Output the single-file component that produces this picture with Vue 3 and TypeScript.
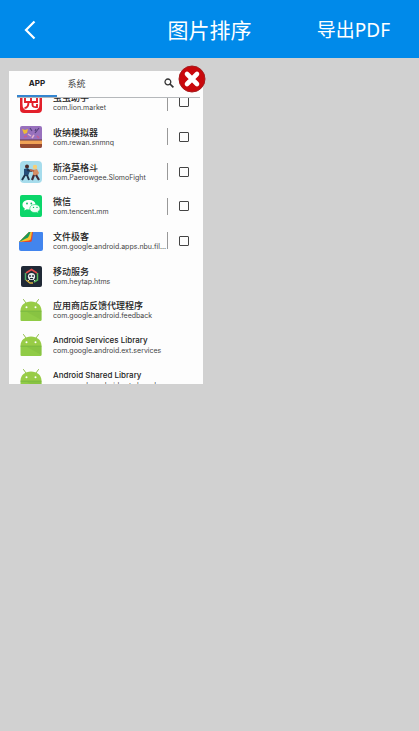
<script setup lang="ts">
import { ref } from 'vue'

type IconName = 'lion' | 'box' | 'fight' | 'chat' | 'files' | 'service' | 'android'

interface AppRow {
  icon: IconName
  title: string
  pkg: string
  selectable: boolean
  checked: boolean
}

const tabs = ['APP', '系统']
const activeTab = ref('APP')
const visible = ref(true)

const isLatin = (text: string): boolean => /^[\w ]+$/.test(text)

const apps = ref<AppRow[]>([
  { icon: 'lion', title: '虫虫助手', pkg: 'com.lion.market', selectable: true, checked: false },
  { icon: 'box', title: '收纳模拟器', pkg: 'com.rewan.snmnq', selectable: true, checked: false },
  { icon: 'fight', title: '斯洛莫格斗', pkg: 'com.Paerowgee.SlomoFight', selectable: true, checked: false },
  { icon: 'chat', title: '微信', pkg: 'com.tencent.mm', selectable: true, checked: false },
  { icon: 'files', title: '文件极客', pkg: 'com.google.android.apps.nbu.files', selectable: true, checked: false },
  { icon: 'service', title: '移动服务', pkg: 'com.heytap.htms', selectable: false, checked: false },
  { icon: 'android', title: '应用商店反馈代理程序', pkg: 'com.google.android.feedback', selectable: false, checked: false },
  { icon: 'android', title: 'Android Services Library', pkg: 'com.google.android.ext.services', selectable: false, checked: false },
  { icon: 'android', title: 'Android Shared Library', pkg: 'com.google.android.ext.shared', selectable: false, checked: false },
])
</script>

<template>
  <div class="page">
    <header class="bar">
      <button class="back" type="button" aria-label="返回">
        <svg viewBox="0 0 12 20" width="12" height="20"><path d="M10.500 1.500 2 10l8.500 8.500" fill="none" stroke="#fff" stroke-width="2.200" /></svg>
      </button>
      <h1 class="heading">图片排序</h1>
      <button class="export" type="button">导出PDF</button>
    </header>

    <main class="gallery">
      <article v-if="visible" class="sheet">
        <div class="shot">
          <nav class="tabs">
            <button
              v-for="tab in tabs"
              :key="tab"
              type="button"
              class="tab"
              :class="{ active: tab === activeTab }"
              @click="activeTab = tab"
            >{{ tab }}</button>
            <button class="search" type="button" aria-label="搜索">
              <svg viewBox="0 0 10 10" width="10" height="10">
                <circle cx="3.900" cy="3.900" r="2.900" fill="none" stroke="#333" stroke-width="1.300" />
                <path d="M6 6l3.400 3.400" stroke="#333" stroke-width="1.700" />
              </svg>
            </button>
          </nav>
          <div class="window">
            <ul class="list">
              <li v-for="app in apps" :key="app.pkg" class="row">
                <svg class="icon" viewBox="0 0 24 24" aria-hidden="true">
                  <g v-if="app.icon === 'lion'">
                    <rect x="1" y="1" width="22" height="22" rx="4" fill="#e3202b" />
                    <path d="M3.500 4h17v10q0 6-5 6H8q-4.500 0-4.500-6z" fill="#fff" />
                    <path d="M6 6v6h12V6zM12 3v9M9.500 12q0 6-4 6M13.500 12v3q0 2.500 4.500 2v-3" fill="none" stroke="#e3202b" stroke-width="1.900" />
                  </g>
                  <g v-else-if="app.icon === 'box'">
                    <rect x="1" y="1" width="22" height="22" rx="2" fill="#9871bd" />
                    <path d="M3 4l3 1 3-1-1 4-3 1z" fill="#edba38" />
                    <path d="M11 3l2 3M20 3l-4 5M17 4l-1 2" stroke="#55417c" stroke-width="1.200" />
                    <path d="M9 9l3 2M15 10l-2 3" stroke="#e4b1cc" stroke-width="1.500" />
                    <path d="M5 12l3-1M18 11l2 2" stroke="#c95c91" stroke-width="1.500" />
                    <path d="M1 15h22v4H1z" fill="#f0a256" />
                    <path d="M1 19h22v2q0 2-2 2H3q-2 0-2-2z" fill="#974a30" />
                    <path d="M1 15h22" stroke="#673749" />
                  </g>
                  <g v-else-if="app.icon === 'fight'">
                    <rect x="1" y="1" width="22" height="22" rx="4" fill="#a6dcec" />
                    <circle cx="8" cy="6.500" r="2" fill="#4b2b2a" />
                    <path d="M5 9l4-1 2 3-2 5H5z" fill="#244d79" />
                    <path d="M8 10l5 1M6 15l-3 5M8 15l2 5" fill="none" stroke="#203349" stroke-width="2" />
                    <circle cx="16" cy="7" r="2.200" fill="#f6ce76" />
                    <path d="M14 10l4-1 2 4-2 3h-4z" fill="#d58d65" />
                    <path d="M15 11l-4-1" stroke="#b96349" stroke-width="2" />
                    <path d="M15 15l-2 5M17 15l3 5" stroke="#422b39" stroke-width="2.200" />
                  </g>
                  <g v-else-if="app.icon === 'chat'">
                    <rect x="1" y="1" width="22" height="22" rx="2" fill="#0bd66a" />
                    <path d="M10 6c-4 0-6.500 2-6.500 4.700 0 1.600.900 2.900 2.300 3.700L5.300 16.500l2.500-1.200c5 1.200 8.700-1.300 8.700-4.600C16.500 8 14 6 10 6z" fill="#fff" />
                    <path d="M16 10.500c-3.200 0-5.200 1.700-5.200 4 0 2.800 3 4.600 6.500 3.800l2 1-.400-1.700c1.400-.900 2.100-1.900 2.100-3.100 0-2.300-2-4-5-4z" fill="#effff5" stroke="#0bd66a" stroke-width=".6" />
                    <g fill="#0bbd60"><circle cx="8" cy="9.500" r=".9" /><circle cx="12.300" cy="9.500" r=".9" /><circle cx="14.500" cy="13.400" r=".7" /><circle cx="18" cy="13.400" r=".7" /></g>
                  </g>
                  <g v-else-if="app.icon === 'files'">
                    <path d="M10 3h13q1 0 1 1v16q0 2-2 2H2q-2 0-2-2v-7z" fill="#4285ee" />
                    <path d="M10 3h4L13 11q0 2-2 2H0z" fill="#df4638" />
                    <path d="M10 3h3l-1 6q0 2-2 2.500L0 13z" fill="#f7c52d" />
                    <path d="M10 3h1.500L10 7q-1 2-3 2.500L0 13z" fill="#1b9a59" />
                  </g>
                  <g v-else-if="app.icon === 'service'">
                    <rect x="2" y="2" width="21" height="21" rx="2" fill="#202936" />
                    <g fill="none" stroke-width="1.500">
                      <path d="M7 9l5.500-3.500L18 9" stroke="#e24c4c" />
                      <path d="M18.500 9v7L15 18" stroke="#59b65c" />
                      <path d="M14 19h-3l-4-3" stroke="#d7b341" />
                      <path d="M6.500 9v7" stroke="#4dad68" />
                    </g>
                    <circle cx="12.500" cy="12.500" r="3.600" fill="#e6ebed" />
                    <circle cx="11" cy="12" r=".9" fill="#202936" /><circle cx="14" cy="12" r=".9" fill="#202936" />
                    <path d="M11 14.500h3" stroke="#202936" />
                    <path d="M9 17l2-2M16 17l-2-2" stroke="#d8dfe2" />
                  </g>
                  <g v-else>
                    <path d="M7 5L4.500 1.500M17 5l2.500-3.500" stroke="#91bd4c" stroke-width="1" stroke-linecap="round" />
                    <path d="M1.500 13C1.500 7 6 3.500 12 3.500S22.500 7 22.500 13z" fill="#98cc46" />
                    <path d="M1.500 13h21v9q0 1-1 1h-19q-1 0-1-1z" fill="#90cb46" />
                    <path d="M1.500 13.200h21" stroke="#71b340" stroke-width=".8" />
                    <path d="M8 14l14.500 8v-8.500z" fill="#80bb3e" opacity=".5" />
                    <circle cx="7.500" cy="9.300" r="1" fill="#fff" /><circle cx="16.500" cy="9.300" r="1" fill="#fff" />
                  </g>
                </svg>
                <div class="text">
                  <span class="title" :class="{ latin: isLatin(app.title) }">{{ app.title }}</span>
                  <span class="pkg">{{ app.pkg }}</span>
                </div>
                <div v-if="app.selectable" class="pick">
                  <input v-model="app.checked" type="checkbox" class="check" :aria-label="app.title" />
                </div>
              </li>
            </ul>
          </div>
        </div>
        <button class="remove" type="button" aria-label="删除图片" @click="visible = false">
          <svg viewBox="0 0 28 28" width="28" height="28">
            <circle cx="14" cy="14" r="13" fill="#c9080c" stroke="#a51c1e" stroke-width="1" />
            <path d="M9 9l10 10M19 9L9 19" stroke="#fff" stroke-width="4.600" stroke-linecap="round" />
          </svg>
        </button>
      </article>
    </main>
  </div>
</template>

<style>
body {
  background: #d1d1d1;
}
</style>

<style scoped>
.page {
  min-height: 100vh;
  background: #d1d1d1;
  font-family: "Noto Sans", "Noto Sans CJK SC", sans-serif;
}

button {
  display: flex;
  align-items: center;
  justify-content: center;
  margin: 0;
  padding: 0;
  border: 0;
  background: none;
  color: inherit;
  font: inherit;
  cursor: pointer;
}

.bar {
  display: grid;
  grid-template-columns: 1fr auto 1fr;
  align-items: center;
  height: 58px;
  padding: 2px 29px 0;
  box-sizing: border-box;
  background: #008aea;
  color: #fff;
}

.back {
  justify-self: start;
  margin-left: -5px;
}

.heading {
  margin: 0;
  font-size: 21px;
  font-weight: 400;
  line-height: 28px;
}

.export {
  justify-self: end;
  font-size: 19px;
  line-height: 28px;
}

.gallery {
  display: grid;
  grid-template-columns: repeat(2, minmax(0, 1fr));
  gap: 12px;
  padding: 13px 10px 13px 9px;
}

.sheet {
  position: relative;
}

.shot {
  display: flex;
  flex-direction: column;
  aspect-ratio: 194 / 313;
  overflow: hidden;
  background: #fdfdfd;
  font-family: Inter, "Noto Sans CJK SC", sans-serif;
}

.tabs {
  display: flex;
  flex: none;
  height: 27px;
  margin: 0 3px 0 8px;
  box-sizing: border-box;
  border-bottom: 1px solid #b5b8bb;
}

.tab {
  width: 39px;
  color: #444;
  font-size: 9px;
  line-height: 12px;
}

.tab.active {
  box-sizing: border-box;
  width: 40px;
  border-bottom: 2px solid #3586d0;
  color: #222;
  font-size: 8px;
  font-weight: 700;
}

.search {
  margin-left: auto;
  padding: 0 26px 2px 0;
}

.window {
  flex: 1;
  min-height: 0;
  overflow: hidden;
}

.list {
  display: grid;
  grid-template-columns: minmax(0, 1fr);
  grid-auto-rows: 1fr;
  height: 312px;
  margin: -13px 0 0;
  padding: 0;
  list-style: none;
}

.row {
  display: flex;
  align-items: center;
  padding: 0 14px 0 10px;
}

.icon {
  flex: none;
  width: 24px;
  height: 24px;
  margin-right: 10px;
}

.text {
  display: flex;
  flex: 1;
  flex-direction: column;
  min-width: 0;
  padding-top: 1px;
}

.title {
  color: #222;
  font-size: 9px;
  font-weight: 500;
  line-height: 11px;
  white-space: nowrap;
}

.title.latin {
  font-size: 8px;
}

.pkg {
  overflow: hidden;
  color: #444;
  font-size: 7px;
  line-height: 10px;
  text-overflow: ellipsis;
  white-space: nowrap;
}

.pick {
  display: flex;
  align-items: center;
  height: 17px;
  padding-left: 11px;
  border-left: 1px solid #999;
}

.check {
  width: 10px;
  height: 10px;
  margin: 0;
  box-sizing: border-box;
  border: 1px solid #444;
  border-radius: 1px;
  appearance: none;
}

.check:checked {
  background: #3586d0;
}

.remove {
  position: absolute;
  top: -6px;
  right: -3px;
}
</style>
